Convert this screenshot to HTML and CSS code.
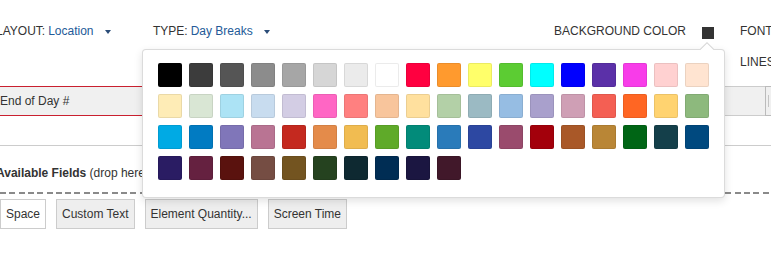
FILE: index.html
```html
<!DOCTYPE html>
<html lang="en">
<head>
<meta charset="utf-8">
<title>Day Breaks layout</title>
<link rel="stylesheet" href="styles.css">
</head>
<body>
<div class="page">
  <div class="toolbar">
    <div class="tb-group tb-layout">
      <span class="tb-label">LAYOUT:</span> <span class="tb-value">Location</span><span class="caret"></span>
    </div>
    <div class="tb-group tb-type">
      <span class="tb-label">TYPE:</span> <span class="tb-value">Day Breaks</span><span class="caret"></span>
    </div>
    <div class="tb-group tb-bg">
      <span class="tb-label">BACKGROUND COLOR</span><span class="bg-swatch"></span>
    </div>
    <div class="tb-col">
      <div class="tb-label">FONT</div>
      <div class="tb-label tb-lines">LINES</div>
    </div>
  </div>

  <div class="field-row">
    <div class="cell cell-selected">End of Day #</div>
    <div class="cell cell-plain"></div>
    <div class="cell cell-next"><span class="handle"></span></div>
  </div>

  <div class="available">
    <div class="available-title"><b>Available Fields</b> (drop here to remove)</div>
    <div class="dashed"></div>
    <div class="chips">
      <span class="chip chip-white">Space</span>
      <span class="chip">Custom Text</span>
      <span class="chip">Element Quantity...</span>
      <span class="chip">Screen Time</span>
    </div>
  </div>

  <div class="popover">
    <span class="popover-arrow"></span>
    <div class="swatches">
      <span class="sw" style="background:#000000"></span>
      <span class="sw" style="background:#3c3c3c"></span>
      <span class="sw" style="background:#555555"></span>
      <span class="sw" style="background:#8c8c8c"></span>
      <span class="sw" style="background:#a6a6a6"></span>
      <span class="sw" style="background:#d6d6d6"></span>
      <span class="sw" style="background:#ebebeb"></span>
      <span class="sw" style="background:#ffffff"></span>
      <span class="sw" style="background:#ff0040"></span>
      <span class="sw" style="background:#ff9a2e"></span>
      <span class="sw" style="background:#ffff6a"></span>
      <span class="sw" style="background:#5ccc33"></span>
      <span class="sw" style="background:#00ffff"></span>
      <span class="sw" style="background:#0000ff"></span>
      <span class="sw" style="background:#5b30a8"></span>
      <span class="sw" style="background:#f83ce9"></span>
      <span class="sw" style="background:#ffd1d1"></span>
      <span class="sw" style="background:#ffe4d1"></span>

      <span class="sw" style="background:#feecb6"></span>
      <span class="sw" style="background:#d9e6d4"></span>
      <span class="sw" style="background:#ace3f5"></span>
      <span class="sw" style="background:#c8dcef"></span>
      <span class="sw" style="background:#d3cde4"></span>
      <span class="sw" style="background:#ff66c4"></span>
      <span class="sw" style="background:#ff8080"></span>
      <span class="sw" style="background:#f8c59c"></span>
      <span class="sw" style="background:#ffe09e"></span>
      <span class="sw" style="background:#b3d0a7"></span>
      <span class="sw" style="background:#9bbac3"></span>
      <span class="sw" style="background:#96bde3"></span>
      <span class="sw" style="background:#a9a0cc"></span>
      <span class="sw" style="background:#cf9fb5"></span>
      <span class="sw" style="background:#f45f53"></span>
      <span class="sw" style="background:#ff6623"></span>
      <span class="sw" style="background:#ffd370"></span>
      <span class="sw" style="background:#8db97d"></span>

      <span class="sw" style="background:#00aae4"></span>
      <span class="sw" style="background:#017bc2"></span>
      <span class="sw" style="background:#8076b9"></span>
      <span class="sw" style="background:#b97493"></span>
      <span class="sw" style="background:#c4291f"></span>
      <span class="sw" style="background:#e48b4a"></span>
      <span class="sw" style="background:#f1bc51"></span>
      <span class="sw" style="background:#5faa29"></span>
      <span class="sw" style="background:#028b7a"></span>
      <span class="sw" style="background:#2a7bba"></span>
      <span class="sw" style="background:#2d48a2"></span>
      <span class="sw" style="background:#9a4b6d"></span>
      <span class="sw" style="background:#a3000b"></span>
      <span class="sw" style="background:#a95828"></span>
      <span class="sw" style="background:#b98636"></span>
      <span class="sw" style="background:#006515"></span>
      <span class="sw" style="background:#143f4a"></span>
      <span class="sw" style="background:#00497f"></span>

      <span class="sw" style="background:#2a1c63"></span>
      <span class="sw" style="background:#652140"></span>
      <span class="sw" style="background:#5a120e"></span>
      <span class="sw" style="background:#754d43"></span>
      <span class="sw" style="background:#735420"></span>
      <span class="sw" style="background:#25421f"></span>
      <span class="sw" style="background:#0e2931"></span>
      <span class="sw" style="background:#002d54"></span>
      <span class="sw" style="background:#1b1641"></span>
      <span class="sw" style="background:#41182a"></span>
    </div>
  </div>
</div>
</body>
</html>
```

FILE: styles.css
```css
* { box-sizing: border-box; }

html, body {
  margin: 0;
  padding: 0;
  background: #ffffff;
}

body {
  font-family: "Liberation Sans", Arial, Helvetica, sans-serif;
  font-size: 12px;
  line-height: 14px;
  color: #333333;
}

.page {
  position: relative;
  width: 771px;
  height: 255px;
  overflow: hidden;
}

/* ---------- toolbar ---------- */
.toolbar {
  display: flex;
  align-items: flex-start;
  padding: 24px 0 17px;
  white-space: nowrap;
}

.tb-group {
  display: flex;
  align-items: center;
  height: 14px;
}

.tb-layout {
  margin-left: -4px;
  width: 157px;
  flex: 0 0 157px;
}

.tb-label { color: #333333; }

.tb-value {
  color: #235a98;
  margin-left: 3px;
}

.caret {
  display: inline-block;
  width: 0;
  height: 0;
  margin-left: 11px;
  margin-top: 2px;
  border-left: 3px solid transparent;
  border-right: 3px solid transparent;
  border-top: 4px solid #2b4d78;
}

.tb-bg {
  margin-left: auto;
}

.bg-swatch {
  display: inline-block;
  width: 12px;
  height: 12px;
  margin-left: 16px;
  margin-top: 3px;
  background: #333333;
}

.tb-col {
  flex: 0 0 31px;
  width: 31px;
  margin-left: 26px;
  overflow: visible;
}

.tb-lines { margin-top: 17px; }

/* ---------- selected field row ---------- */
.field-row {
  display: flex;
  height: 30px;
  background: #f0f0f0;
}

.cell {
  display: flex;
  align-items: center;
}

.cell-selected {
  flex: 0 0 460px;
  border-top: 1px solid #c9202f;
  border-bottom: 1px solid #c9202f;
  padding-left: 0;
}

.cell-plain {
  flex: 1 1 auto;
  border-top: 1px solid #cccccc;
  border-bottom: 1px solid #cccccc;
}

.cell-next {
  flex: 0 0 6px;
  border: 1px solid #bbbbbb;
  border-right: 0;
  padding-left: 2px;
}

.handle {
  display: block;
  width: 2px;
  height: 12px;
  border-left: 1px solid #c4c4c4;
}

/* ---------- available fields ---------- */
.available {
  margin-top: 29px;
  border-top: 1px solid #cccccc;
  padding-top: 20px;
}

.available-title {
  margin-left: -4px;
  white-space: nowrap;
  color: #333333;
}

.available-title b { font-weight: bold; }

.dashed {
  margin-top: 12px;
  height: 2px;
  background: repeating-linear-gradient(90deg, #8a8a8a 0 6px, transparent 6px 9.3px);
}

.chips {
  display: flex;
  gap: 10px;
  margin-top: 5px;
}

.chip {
  display: inline-block;
  height: 30px;
  line-height: 28px;
  padding: 0 5px;
  border: 1px solid #cccccc;
  background: #eeeeee;
  color: #333333;
  white-space: nowrap;
}

.chip-white { background: #ffffff; }

/* ---------- colour popover ---------- */
.popover {
  position: absolute;
  left: 142px;
  top: 49px;
  width: 583px;
  height: 149px;
  padding: 13px 15px 17px;
  background: #ffffff;
  border: 1px solid rgba(0, 0, 0, 0.14);
  border-radius: 4px;
  box-shadow: 0 3px 8px rgba(0, 0, 0, 0.12);
}

.popover-arrow {
  position: absolute;
  left: 559px;
  top: -6px;
  width: 10px;
  height: 10px;
  background: #ffffff;
  border-left: 1px solid rgba(0, 0, 0, 0.16);
  border-top: 1px solid rgba(0, 0, 0, 0.16);
  transform: rotate(45deg);
}

.swatches {
  display: grid;
  grid-template-columns: repeat(18, 24px);
  grid-auto-rows: 24px;
  gap: 7px;
}

.sw {
  display: block;
  width: 24px;
  height: 24px;
  border: 1px solid rgba(0, 0, 0, 0.08);
  border-radius: 2px;
}
```
